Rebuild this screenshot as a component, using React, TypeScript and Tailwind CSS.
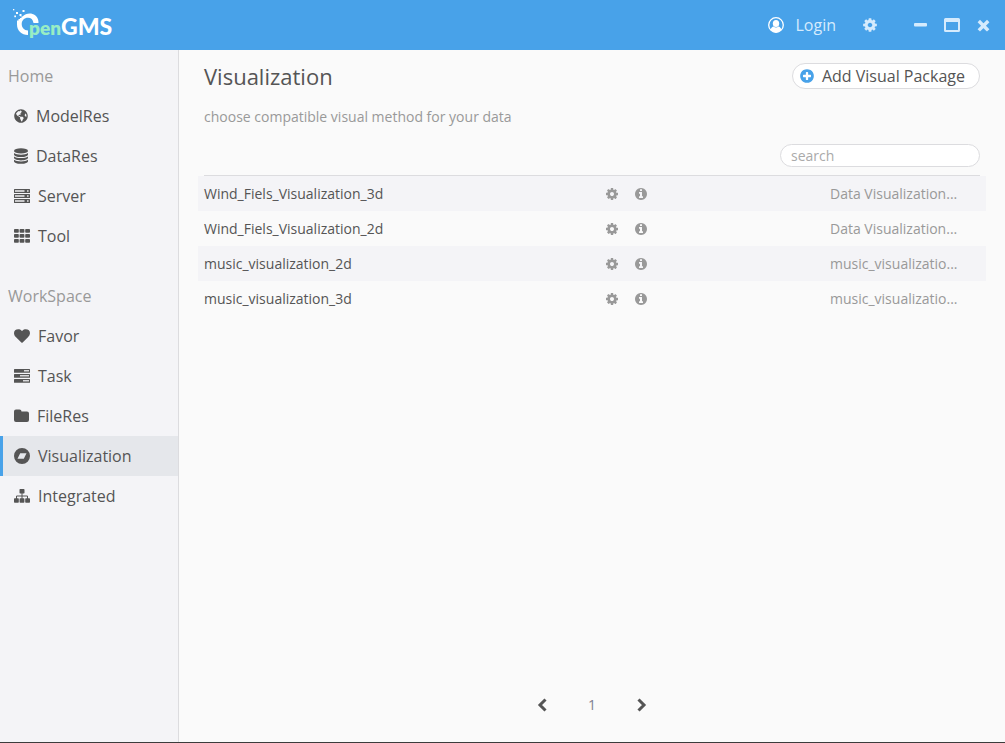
import React from "react";
import { FaGlobeAmericas } from "react-icons/fa";

type IconProps = { className?: string };

function Glyph({ d, className = "" }: IconProps & { d: string }) {
  return (
    <svg viewBox="0 0 1792 1792" fill="currentColor" className={`shrink-0 ${className}`} aria-hidden="true">
      <path d={d} />
    </svg>
  );
}

const DISC =
  "m640 0q0 209-103 385.5t-279.5 279.5-385.5 103-385.5-103-279.5-279.5-103-385.5 103-385.5 279.5-279.5 385.5-103 385.5 103 279.5 279.5 103 385.5z";
const COG =
  "M1152 896q0-106-75-181t-181-75-181 75-75 181 75 181 181 75 181-75 75-181zm512-109v222q0 12-8 23t-20 13l-185 28q-19 54-39 91 35 50 107 138 10 12 10 25t-9 23q-27 37-99 108t-94 71q-12 0-26-9l-138-108q-44 23-91 38-16 136-29 186-7 28-36 28h-222q-14 0-24.5-8.5t-11.5-21.5l-28-184q-49-16-90-37l-141 107q-10 9-25 9-14 0-25-11-126-114-165-168-7-10-7-23 0-12 8-23 15-21 51-66.5t54-70.5q-27-50-41-99l-183-27q-13-2-21-12.5t-8-23.5v-222q0-12 8-23t19-13l186-28q14-46 39-92-40-57-107-138-10-12-10-24 0-10 9-23 26-36 98.5-107.5t94.5-71.5q13 0 26 10l138 107q44-23 91-38 16-136 29-186 7-28 36-28h222q14 0 24.5 8.5t11.5 21.5l28 184q49 16 90 37l142-107q9-9 24-9 13 0 25 10 129 119 165 170 7 8 7 22 0 12-8 23-15 21-51 66.5t-54 70.5q26 50 41 98l183 28q13 2 21 12.5t8 23.5z";
const INFO =
  "M1152 1376v-160q0-14-9-23t-23-9h-96v-512q0-14-9-23t-23-9h-320q-14 0-23 9t-9 23v160q0 14 9 23t23 9h96v320h-96q-14 0-23 9t-9 23v160q0 14 9 23t23 9h448q14 0 23-9t9-23zm-128-896v-160q0-14-9-23t-23-9h-192q-14 0-23 9t-9 23v160q0 14 9 23t23 9h192q14 0 23-9t9-23zM1024 896" + DISC;
const PLUS =
  "M1344 960v-128q0-26-19-45t-45-19h-256v-256q0-26-19-45t-45-19h-128q-26 0-45 19t-19 45v256h-256q-26 0-45 19t-19 45v128q0 26 19 45t45 19h256v256q0 26 19 45t45 19h128q26 0 45-19t19-45v-256h256q26 0 45-19t19-45zM1024 896" + DISC;
const HEART =
  "M896 1664q-26 0-44-18l-624-602q-10-8-27.5-26t-55.5-65.5-68-97.5-53.5-121-23.5-138q0-220 127-344t351-124q62 0 126.5 21.5t120 58 95.5 68.5 76 68q36-36 76-68t95.5-68.5 120-58 126.5-21.5q224 0 351 124t127 344q0 221-229 450l-623 600q-18 18-44 18z";

const DatabaseIcon = () => (
  <svg viewBox="0 0 14 16" className="h-4 w-[14px] shrink-0" fill="currentColor" aria-hidden="true">
    <ellipse cx="7" cy="2.900" rx="7" ry="2.700" />
    {[5, 8.4, 11.8].map((y) => (
      <path key={y} d={`M0 ${y}c1.500 1.200 4 1.700 7 1.700s5.500-.5 7-1.700v1.400c0 1.400-3 2.600-7 2.600s-7-1.200-7-2.600Z`} />
    ))}
  </svg>
);

const ServerIcon = () => (
  <svg viewBox="0 0 16 16" className="size-4 shrink-0" fill="currentColor" aria-hidden="true">
    {[1, 6, 11].map((y) => (
      <g key={y}>
        <rect x="0" y={y} width="16" height="4" rx="0.5" />
        <rect x="1" y={y + 1} width="9.500" height="2" fill="#c9c9cb" />
        <rect x="13" y={y + 1.200} width="1.600" height="1.600" fill="#dcdcde" />
      </g>
    ))}
  </svg>
);

const TaskIcon = () => (
  <svg viewBox="0 0 16 16" className="size-4 shrink-0" fill="currentColor" aria-hidden="true">
    {[1, 6, 11].map((y, i) => (
      <g key={y}>
        <rect x="0" y={y} width="16" height="3.700" rx="0.5" />
        <rect x={[10, 6, 9][i]} y={y + 1} width={[5, 9, 6][i]} height="1.500" fill="#d8d8da" />
      </g>
    ))}
  </svg>
);

const GridIcon = () => (
  <svg viewBox="0 0 16 16" className="size-4 shrink-0" fill="currentColor" aria-hidden="true">
    {[1, 6, 11].map((y) =>
      [0, 5.6, 11.2].map((x) => <rect key={`${x}-${y}`} x={x} y={y} width="4.800" height="3.800" rx="0.8" />),
    )}
  </svg>
);

const FolderIcon = () => (
  <svg viewBox="0 0 15 16" className="h-4 w-[15px] shrink-0" fill="currentColor" aria-hidden="true">
    <path d="M2 1.500h3.500a2 2 0 0 1 2 2h5.500a2 2 0 0 1 2 2v6.500a2 2 0 0 1-2 2H2a2 2 0 0 1-2-2v-8.500a2 2 0 0 1 2-2Z" />
  </svg>
);

const BandcampIcon = () => (
  <svg viewBox="0 0 16 16" className="size-4 shrink-0" fill="currentColor" aria-hidden="true">
    <path fillRule="evenodd" d="M8 0a8 8 0 1 1 0 16A8 8 0 0 1 8 0ZM6.200 5.300 3.500 10.700h6.300l2.700-5.400Z" />
  </svg>
);

const SitemapIcon = () => (
  <svg viewBox="0 0 16 16" className="size-4 shrink-0" fill="currentColor" aria-hidden="true">
    <rect x="5.500" y="1" width="5" height="4.500" rx="0.7" />
    <rect x="0" y="10.300" width="4.800" height="4.500" rx="0.7" />
    <rect x="5.600" y="10.300" width="4.800" height="4.500" rx="0.7" />
    <rect x="11.200" y="10.300" width="4.800" height="4.500" rx="0.7" />
    <path d="M8 5v6M2.500 11V8h11v3" fill="none" stroke="currentColor" />
  </svg>
);

const UserIcon = () => (
  <svg viewBox="0 0 16 16" className="size-4 shrink-0" aria-hidden="true">
    <circle cx="8" cy="8" r="7.300" fill="none" stroke="currentColor" strokeWidth="1.300" />
    <ellipse cx="8" cy="6.500" rx="3.200" ry="3.500" fill="currentColor" />
    <path d="M2.600 12.600C3 10.600 4.400 9.600 5.500 9.400q2.500 2 5 0c1.100.2 2.500 1.200 2.900 3.200A7 7 0 0 1 8 15.400a7 7 0 0 1-5.400-2.800Z" fill="currentColor" />
  </svg>
);

const Logo = () => (
  <svg viewBox="0 0 104 36" className="h-9 w-26" role="img" aria-label="OpenGMS">
    <path d="M10.500 9.500C13 7 17 6 20.500 7c4 1.200 6 4.500 6 9h-5c-.5-3.500-2.500-5.300-5.500-5.300-3.700 0-6.300 2.700-6.300 6.300 0 3.500 2.400 6.300 6.300 6.500v4.500C9.500 28 5 23.500 5 17.500V12h3V9.500Z" fill="#fff" />
    <g fill="#fff">
      <rect x="1" y="2" width="1.300" height="1.300" />
      <rect x="4" y="5" width="2" height="2" />
      <rect x="10.500" y="3" width="2" height="2" />
      <rect x="2.300" y="8.500" width="1.700" height="1.700" />
      <rect x="7.500" y="7" width="2" height="2" />
    </g>
    <g fill="#48a2e9">
      <rect x="8" y="9.500" width="1.500" height="1.500" />
      <rect x="5" y="12" width="1.500" height="1.500" />
    </g>
    <text x="17" y="28" fill="#98edc4" fontFamily="Lato" fontWeight="800" fontSize="19">pen</text>
    <text x="49" y="28" fill="#fff" fontFamily="Lato" fontWeight="900" fontSize="23">GMS</text>
  </svg>
);

const homeItems = [
  { label: "ModelRes", icon: <FaGlobeAmericas className="size-[14px]" /> },
  { label: "DataRes", icon: <DatabaseIcon /> },
  { label: "Server", icon: <ServerIcon /> },
  { label: "Tool", icon: <GridIcon /> },
];
const workItems = [
  { label: "Favor", icon: <Glyph d={HEART} className="size-4" /> },
  { label: "Task", icon: <TaskIcon /> },
  { label: "FileRes", icon: <FolderIcon /> },
  { label: "Visualization", icon: <BandcampIcon />, active: true },
  { label: "Integrated", icon: <SitemapIcon /> },
];

type Item = { label: string; icon: React.ReactNode; active?: boolean };

function NavGroup({ title, items }: { title: string; items: Item[] }) {
  return (
    <section>
      <h2 className="flex h-10 items-center pl-2 text-[#999]">{title}</h2>
      <ul>
        {items.map((item) => (
          <li key={item.label}>
            <a
              href="#"
              aria-current={item.active ? "page" : undefined}
              className={`flex h-10 items-center gap-2 border-l-3 pl-[11px] ${
                item.active ? "border-[#48a2e9] bg-[#e5e7eb]" : "border-transparent"
              }`}
            >
              {item.icon}
              {item.label}
            </a>
          </li>
        ))}
      </ul>
    </section>
  );
}

const packages = [
  { name: "Wind_Fiels_Visualization_3d", kind: "Data Visualization..." },
  { name: "Wind_Fiels_Visualization_2d", kind: "Data Visualization..." },
  { name: "music_visualization_2d", kind: "music_visualizatio..." },
  { name: "music_visualization_3d", kind: "music_visualizatio..." },
];

export default function App() {
  return (
    <div className="flex min-h-screen flex-col border-b border-[#3c3c3c] bg-[#fafafa] font-['Open_Sans',sans-serif] text-base text-[#555]">
      <header className="flex h-[50px] items-center justify-between bg-[#48a2e9] pr-[15px] pl-3 text-[#d5ebfd]">
        <Logo />
        <div className="flex items-center">
          <button className="flex items-center gap-[11px]">
            <span className="text-white"><UserIcon /></span>
            Login
          </button>
          <button aria-label="Settings" className="ml-[26px]"><Glyph d={COG} className="size-4" /></button>
          <button aria-label="Minimize" className="ml-9">
            <svg viewBox="0 0 14 16" className="h-4 w-[14px]" aria-hidden="true"><rect x="0" y="6" width="13" height="3.500" rx="1" fill="currentColor" /></svg>
          </button>
          <button aria-label="Maximize" className="ml-4">
            <svg viewBox="0 0 17 16" className="h-4 w-[17px]" aria-hidden="true">
              <path fillRule="evenodd" fill="currentColor" d="M1.500 1h13q1.500 0 1.500 1.500v11q0 1.500-1.500 1.500h-13Q0 15 0 13.500v-11Q0 1 1.500 1ZM2 5v8h12V5Z" />
            </svg>
          </button>
          <button aria-label="Close" className="ml-4">
            <svg viewBox="0 0 13 16" className="h-4 w-[13px]" aria-hidden="true"><path d="M3 5.200l7 7M10 5.200l-7 7" stroke="currentColor" strokeWidth="3.400" strokeLinecap="square" /></svg>
          </button>
        </div>
      </header>

      <div className="flex flex-1">
        <nav className="flex w-[179px] shrink-0 flex-col gap-5 border-r border-[#dcdcdf] bg-[#f4f4f7] pt-[6px]">
          <NavGroup title="Home" items={homeItems} />
          <NavGroup title="WorkSpace" items={workItems} />
        </nav>

        <main className="flex flex-1 flex-col px-[25px]">
          <div className="flex items-center justify-between pt-3">
            <h1 className="text-[22px] leading-7">Visualization</h1>
            <button className="flex h-[26px] items-center gap-[7px] rounded-full border border-[#dcdcdf] bg-white pr-[14px] pl-[6px]">
              <Glyph d={PLUS} className="size-4 text-[#48a2e9]" />
              Add Visual Package
            </button>
          </div>
          <p className="mt-[17px] text-sm text-[#999]">choose compatible visual method for your data</p>
          <div className="mt-[17px] flex justify-end border-b border-[#dcdcdf] pb-2">
            <input
              aria-label="search"
              placeholder="search"
              className="h-[23px] w-[200px] rounded-full border border-[#dcdcdf] bg-white px-[10px] text-sm placeholder:text-[#aaa]"
            />
          </div>
          <ul className="-mx-[6px] text-sm">
            {packages.map((item) => (
              <li key={item.name} className="flex h-[35px] items-center px-[6px] odd:bg-[#f4f4f7]">
                <span className="w-[401px]">{item.name}</span>
                <span className="flex flex-1 gap-[15px] text-[#999]">
                  <button aria-label="Settings"><Glyph d={COG} className="size-[14px]" /></button>
                  <button aria-label="Details"><Glyph d={INFO} className="size-[14px]" /></button>
                </span>
                <span className="w-[150px] text-[#999]">{item.kind}</span>
              </li>
            ))}
          </ul>
          <div className="mt-auto mb-[27px] flex items-center justify-center gap-10 text-sm">
            <button aria-label="Previous page">
              <svg viewBox="0 0 12 16" className="h-4 w-3" aria-hidden="true"><path d="M9.500 2.500L4 8l5.500 5.500" fill="none" stroke="currentColor" strokeWidth="3" /></svg>
            </button>
            <span className="text-[#808090]">1</span>
            <button aria-label="Next page">
              <svg viewBox="0 0 12 16" className="h-4 w-3" aria-hidden="true"><path d="M2.500 2.500L8 8l-5.500 5.500" fill="none" stroke="currentColor" strokeWidth="3" /></svg>
            </button>
          </div>
        </main>
      </div>
    </div>
  );
}
